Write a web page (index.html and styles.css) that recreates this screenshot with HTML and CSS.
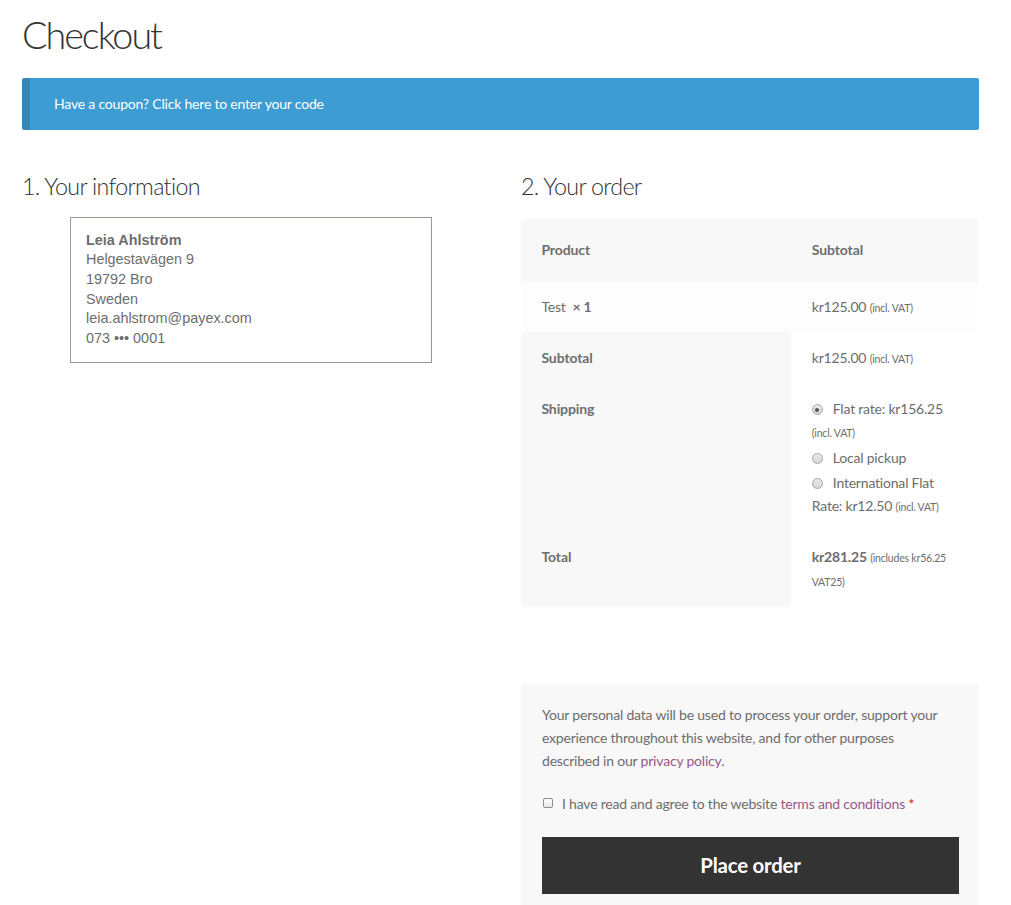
FILE: index.html
```html
<!DOCTYPE html>
<html lang="en">
<head>
<meta charset="utf-8">
<title>Checkout</title>
<link rel="stylesheet" href="styles.css">
</head>
<body>
<div class="page">
  <h1 class="page-title">Checkout</h1>
  <div class="notice">Have a coupon? <a href="#">Click here to enter your code</a></div>
  <div class="columns">
    <div class="col-info">
      <h3 class="section-title">1. Your information</h3>
      <div class="address-box">
        <div class="addr-name">Leia Ahlström</div>
        <div>Helgestavägen 9</div>
        <div>19792 Bro</div>
        <div>Sweden</div>
        <div>leia.ahlstrom@payex.com</div>
        <div>073 ••• 0001</div>
      </div>
    </div>
    <div class="col-order">
      <h3 class="section-title">2. Your order</h3>
      <table class="order-table">
        <thead>
          <tr><th class="c1">Product</th><th class="c2">Subtotal</th></tr>
        </thead>
        <tbody>
          <tr><td class="c1">Test&nbsp; <strong>× 1</strong></td><td class="c2">kr125.00 <small>(incl. VAT)</small></td></tr>
        </tbody>
        <tfoot>
          <tr><th class="c1">Subtotal</th><td class="c2">kr125.00 <small>(incl. VAT)</small></td></tr>
          <tr class="ship-row"><th class="c1">Shipping</th>
            <td class="c2">
              <ul class="ship-list">
                <li><input type="radio" name="ship" class="radio" checked><label>Flat rate: kr156.25 <small>(incl. VAT)</small></label></li>
                <li><input type="radio" name="ship" class="radio"><label>Local pickup</label></li>
                <li><input type="radio" name="ship" class="radio"><label>International Flat Rate: kr12.50 <small>(incl. VAT)</small></label></li>
              </ul>
            </td>
          </tr>
          <tr class="total-row"><th class="c1">Total</th><td class="c2"><strong>kr281.25</strong> <small>(includes kr56.25 VAT25)</small></td></tr>
        </tfoot>
      </table>
      <div class="payment">
        <p class="privacy">Your personal data will be used to process your order, support your experience throughout this website, and for other purposes described in our <a href="#">privacy policy</a>.</p>
        <div class="terms"><input type="checkbox" class="check"><span>I have read and agree to the website <a href="#">terms and conditions</a> <abbr class="req">*</abbr></span></div>
        <button class="place-order">Place order</button>
      </div>
    </div>
  </div>
</div>
</body>
</html>
```
FILE: styles.css
```css
html, body { margin: 0; padding: 0; background: #fff; }
body {
  font-family: "Lato", "Open Sans", sans-serif;
  font-size: 14px;
  letter-spacing: -0.2px;
  line-height: 23.3px;
  color: #6d6d6d;
}
a { color: #96588a; text-decoration: none; }
.page { width: 957px; padding: 0 0 0 22px; }
.page-title {
  font-weight: 300;
  font-size: 37.7px;
  line-height: 45.8px;
  color: #333;
  margin: 12px 0 20px;
  letter-spacing: -2px;
}
.notice {
  background: #3d9cd2;
  color: #fff;
  border-left: 8px solid #3585b6;
  border-radius: 2px;
  padding: 14.4px 20px 14.4px 24px;
  line-height: 23.2px;
}
.notice a { color: #fff; }
.columns { display: flex; justify-content: space-between; margin-top: 41px; }
.col-info { width: 430px; }
.col-order { width: 457px; margin-right: 1px; }
.section-title {
  margin: 0;
  font-weight: 300;
  font-size: 23.3px;
  line-height: 30px;
  color: #333;
  letter-spacing: -0.7px;
}
.address-box {
  margin: 16px 0 0 48px;
  width: 330px;
  border: 1px solid #a39490;
  padding: 13px 15px 14px 15px;
  font-family: "Liberation Sans", Arial, sans-serif;
  font-size: 14.4px;
  letter-spacing: 0;
  line-height: 19.6px;
  color: #6d6d6d;
}
.addr-name { font-weight: bold; }
.order-table {
  margin-top: 18px;
  width: 457px;
  border-collapse: separate;
  border-spacing: 0;
  table-layout: fixed;
}
.order-table th, .order-table td {
  text-align: left;
  vertical-align: top;
  padding: 13.8px 20.4px;
  line-height: 23.3px;
}
.order-table th { font-weight: 700; letter-spacing: -0.1px; }
.order-table .c1 { width: 229.6px; }
.order-table thead th { background: #f8f8f8; padding-top: 19.5px; padding-bottom: 20px; }
.order-table tbody td { background: #fdfdfd; }
.order-table tfoot th { background: #f8f8f8; }
.order-table tfoot td { background: #fff; }
.order-table strong { font-weight: 700; }
small { font-size: 10.5px; line-height: 1; letter-spacing: -0.2px; }
.total-row td { padding-bottom: 15px; }
.ship-list { list-style: none; margin: 0; padding: 0; }
.ship-list li { margin-bottom: 2px; }
.ship-list li:last-child { margin-bottom: 0; }
.radio {
  appearance: none;
  -webkit-appearance: none;
  width: 11px; height: 11px;
  margin: 0 10px 0 0;
  border: 1px solid #a6a6a6;
  border-radius: 50%;
  background: linear-gradient(#eaeaea, #d6d6d6);
  vertical-align: -1px;
  position: relative;
}
.radio:checked::after {
  content: "";
  position: absolute;
  left: 2.5px; top: 2.5px;
  width: 4px; height: 4px;
  border-radius: 50%;
  background: #555;
}
.payment {
  margin-top: 77px;
  background: #f8f8f8;
  padding: 19px 20px 20px 21px;
}
.privacy { margin: 0 0 20px; line-height: 23px; padding-right: 10px; }
.terms { display: flex; align-items: center; gap: 9px; line-height: 23px; }
.check {
  appearance: none;
  -webkit-appearance: none;
  width: 10px; height: 10px;
  margin: 0 0 0 1px;
  border: 1px solid #8d8d8d;
  border-radius: 2px;
  background: linear-gradient(#fff, #e8e8e8);
}
.req { color: #e2401c; text-decoration: none; font-weight: 700; }
.place-order {
  display: block;
  margin-top: 22px;
  width: 417px;
  height: 57px;
  border: 0;
  background: #333;
  color: #fff;
  font-family: inherit;
  font-size: 20.4px;
  font-weight: 700;
  letter-spacing: -0.2px;
}
```
